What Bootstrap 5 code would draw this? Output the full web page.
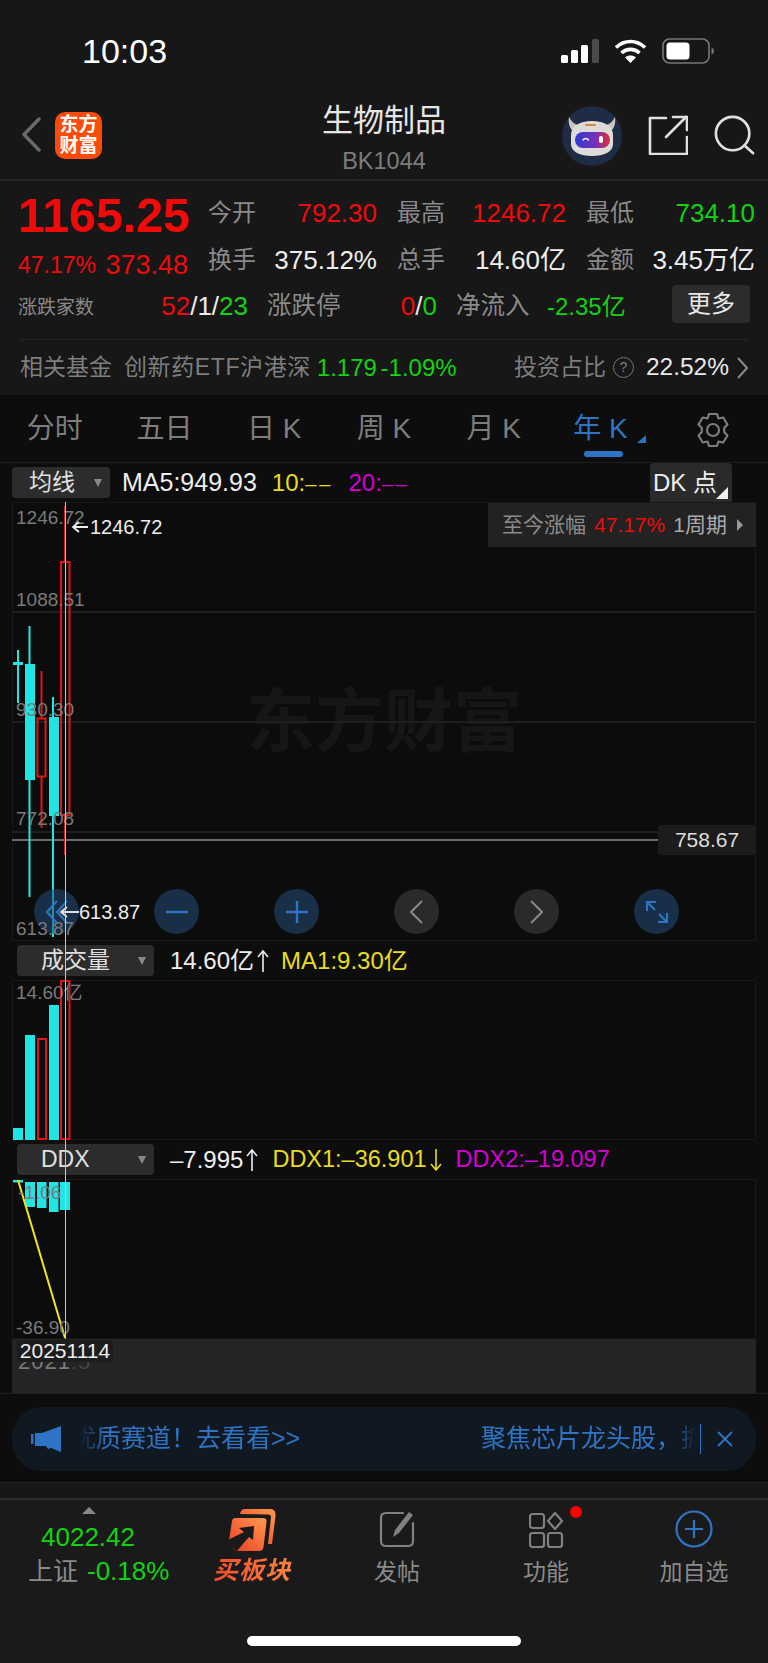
<!DOCTYPE html>
<html lang="zh-CN">
<head>
    <meta charset="UTF-8">
    <meta name="viewport" content="width=device-width, initial-scale=1.0">
    <title>生物制品</title>
    <link href="https://cdn.jsdelivr.net/npm/bootstrap@5.3.0/dist/css/bootstrap.min.css" rel="stylesheet">
    <style>
        body { width: 768px; height: 1663px; overflow: hidden; background: #0d0d0d; color: #e8e8e8;
            font-family: "Liberation Sans", "Noto Sans CJK SC", sans-serif; }
        .c-red { color: #f00a0a; }
        .c-green { color: #12d212; }
        .c-blue { color: #2f74c4; }
        .c-yellow { color: #e8dc20; }
        .c-mag { color: #d400d4; }
        .c-gray { color: #8a8a8a; }
        .c-white { color: #eee; }

        .status-bar { height: 90px; background: #171717; padding: 0 54px 0 82px; }
        .status-time { font-size: 34px; font-weight: 500; color: #fff; margin-top: 12px; }
        .status-icons { margin-top: 12px; column-gap: 15px; }
        .nav-head { height: 91px; background: #171717; border-bottom: 2px solid #262626; padding: 0 12px 0 22px; }
        .brand-logo { width: 47px; height: 47px; border-radius: 10px; background: #fb4b0a; color: #fff; font-size: 19px;
            font-weight: 700; line-height: 21px; margin-left: 14px; margin-top: 2px; text-align: center; padding-top: 2px; }
        .nav-title { left: 0; right: 0; top: 9px; }
        .nav-name { font-size: 31px; line-height: 44px; color: #e6e6e6; }
        .nav-code { font-size: 23.5px; line-height: 28px; margin-top: 4px; color: #7c7c7c; }
        .nav-avatar { margin-top: 2px; }
        .nav-gap { margin-left: 26px; }

        .info-box { height: 214px; background: #171717; }
        .info-top { padding: 16px 13px 0 18px; height: 95px; }
        .info-left { width: 172px; margin-right: 18px; }
        .big-price { font-size: 48.5px; font-weight: 700; line-height: 44px; margin-top: -4px; white-space: nowrap; letter-spacing: -.1px; }
        .price-sub { font-size: 27px; line-height: 32px; margin-top: 12px; padding-right: 2px; white-space: nowrap; }
        .price-pct { font-size: 23px; }
        .info-pairs { row-gap: 15px; width: 547px; }
        .info-pair { width: 169px; height: 32px; font-size: 26px; line-height: 32px; white-space: nowrap; }
        .info-pair .lbl { font-size: 24px; color: #8a8a8a; }
        .info-row3 { display: grid; grid-template-columns: 143px 106px 73px 116px 91px 125px 78px; grid-template-rows: 38px; padding-left: 18px;
            height: 38px; margin-top: 9px; align-items: center; font-size: 26px; white-space: nowrap; }
        .cell-end { text-align: right; padding-right: 19px; padding-top: 5px; }
        .small-lbl { font-size: 19px; color: #8a8a8a; padding-top: 9px; }
        .mid-lbl { font-size: 24.5px; color: #8a8a8a; padding-top: 5px; }
        .flow-val { font-size: 24px; padding-top: 6px; }
        .more-btn { width: 78px; height: 38px; background: #2c2c2c; border-radius: 4px; color: #e8e8e8; font-size: 24px; line-height: 38px; text-align: center; }
        .info-row4 { margin: 16px 20px 0; border-top: 1px solid #262626; height: 56px; font-size: 23px; color: #7e7e7e; white-space: nowrap; }
        .fund-name { margin-left: 12px; letter-spacing: .6px; }
        .fund-val { margin-left: 6px; font-size: 24px; word-spacing: -3px; }
        .q-mark { width: 21px; height: 21px; border: 1px solid #777; border-radius: 50%; font-size: 14px; text-align: center; line-height: 19px; margin: 0 12px 0 7px; }
        .pct-val { font-size: 24.5px; color: #e8e8e8; }

        .tab-row { height: 68px; border-bottom: 1px solid #1e1e1e; font-size: 28px; color: #7d7d7d; }
        .tab-on { color: #2f74c4; }
        .tab-on-text { margin-right: 6px; }
        .tab-line { width: 39px; height: 6px; background: #2f74c4; border-radius: 3px; left: 35px; bottom: 5px; }
        .tab-corner { width: 0; height: 0; border-left: 9px solid transparent; border-bottom: 8px solid #2f74c4; left: 88px; top: 40px; }

        .chart-wrap { padding: 0 12px; height: 930px; }
        .ind-bar { height: 39px; font-size: 24px; white-space: nowrap; }
        .ind-pick { background: #2c2c2c; border-radius: 4px; height: 31px; color: #e0e0e0; font-size: 23px; line-height: 31px; flex-shrink: 0; }
        .pick-s { width: 98px; padding-left: 17px; }
        .pick-l { width: 137px; margin-left: 5px; padding-left: 24px; }
        .pick-caret { width: 0; height: 0; border-left: 4px solid transparent; border-right: 4px solid transparent; border-top: 8px solid #888; right: 8px; top: 12px; }
        .ma-val { font-size: 25px; margin-left: 12px; }
        .ma-extra { margin-left: 15px; }
        .ma-dash { font-size: 20px; letter-spacing: 3px; }
        .vol-extra { margin-left: 12px; }
        .val-gap { margin-left: 16px; }
        .ddx-one { font-size: 23.5px; margin-left: 14px; }
        .up-arrow { margin-left: 3px; flex-shrink: 0; }
        .dk-btn { width: 82px; height: 39px; background: #2a2a2a; border-radius: 4px 4px 0 0; margin-right: 24px; padding-right: 12px; text-align: center; line-height: 39px; font-size: 24px; color: #eee; }
        .dk-corner { width: 0; height: 0; border-left: 12px solid transparent; border-bottom: 12px solid #eee; right: 4px; bottom: 3px; }
        .chart-pane { box-shadow: inset 0 0 0 1px #181818; background: #0c0c0c; }
        .pane-main { height: 439px; }
        .pane-sub { height: 160px; }
        .chart-svg { left: 0; top: 0; }
        .ax-lbl { font-size: 19px; fill: #7a7a7a; }
        .arrow-lbl { font-size: 20px; fill: #eee; }
        .water-mark { left: 234px; top: 188px; font-size: 69px; font-weight: 700; color: #161616; line-height: 66px; white-space: nowrap; }
        .since-box { right: 0; top: 1px; width: 268px; height: 44px; background: #222; font-size: 21px; color: #8a8a8a; padding-left: 14px; white-space: nowrap; }
        .since-cycle { color: #aaa; }
        .since-arrow { width: 0; height: 0; border-top: 6px solid transparent; border-bottom: 6px solid transparent; border-left: 6px solid #999; margin-left: 10px; }
        .last-box { right: 0; top: 323px; width: 98px; height: 30px; background: #1c1c1c; border-radius: 3px; font-size: 21px; line-height: 30px; text-align: center; color: #ddd; }
        .round-row { left: 22px; top: 387px; gap: 75px; }
        .round-btn { width: 45px; height: 45px; border-radius: 50%; }
        .rb-blue { background: rgba(34, 77, 121, .55); }
        .rb-gray { background: #2a2a2a; }
        .cross-v { left: 65px; top: 39px; width: 1px; height: 837px; background: #c8c8c8; z-index: 3; }
        .axis-strip { height: 54px; background: #242426; }
        .date-tip { left: 5px; top: 1px; height: 22px; width: 96px; background: #1d1d1d; font-size: 21px; line-height: 22px; text-align: center; color: #eee; border-radius: 2px; }
        .date-tick { left: 6px; top: 10px; font-size: 22px; line-height: 26px; letter-spacing: 1px; color: #7a7a7a; }
        .date-dim { color: #444; }

        .banner-wrap { height: 89px; padding: 13px 12px 0; border-top: 1px solid #202020; }
        .banner-box { height: 64px; border-radius: 30px; background: #101822; padding-left: 19px; font-size: 25px; white-space: nowrap; }
        .banner-text { width: 617px; margin-left: 18px; -webkit-mask-image: linear-gradient(to right, transparent 0, #000 26px, #000 590px, transparent 100%); mask-image: linear-gradient(to right, transparent 0, #000 26px, #000 590px, transparent 100%); }
        .banner-left { width: 410px; margin-left: -9px; }
        .banner-sep { width: 1px; height: 30px; background: #2f74c4; margin-left: 3px; }
        .gap-strip { height: 16px; background: #171717; border-top: 1px solid #202020; }
        .tool-bar { height: 165px; background: #1a1a1a; border-top: 2px solid #2a2a2a; }
        .tool-cells { height: 95px; display: grid; grid-template-columns: 178px 148px 142px 156px 140px; }
        .tool-quote { padding-top: 7px; padding-left: 28px; }
        .up-tri { width: 0; height: 0; border-left: 7px solid transparent; border-right: 7px solid transparent; border-bottom: 7px solid #888; margin-left: 54px; }
        .quote-num { font-size: 26px; line-height: 32px; margin: 7px 0 0 13px; }
        .quote-line { font-size: 25px; line-height: 34px; margin-top: 1px; white-space: nowrap; }
        .quote-pct { font-size: 26px; margin-left: 2px; }
        .tool-cell { font-size: 23px; line-height: 32px; color: #8a8a8a; }
        .tool-icon { height: 48px; }
        .tool-icon-buy { height: 51px; }
        .tool-label { margin-top: 8px; }
        .buy-word { font-size: 25px; font-weight: 700; font-style: italic; line-height: 26px; letter-spacing: 1px; margin-top: 6px;
            background: linear-gradient(90deg, #f0351f, #ff9a4a); -webkit-background-clip: text; background-clip: text; color: transparent; }
        .red-dot { width: 12px; height: 12px; border-radius: 50%; background: #f00; right: 42px; top: 6px; }
        .home-bar { width: 274px; height: 10px; background: #fff; border-radius: 5px; margin: 41px auto 0; }
    </style>
</head>
<body>

<div class="status-bar d-flex justify-content-between align-items-center">
    <span class="status-time">10:03</span>
    <div class="status-icons d-flex align-items-center">
        <svg width="38" height="24" viewBox="0 0 38 24"><rect x="0" y="16" width="7" height="8" rx="1.5" fill="#fff"/><rect x="10" y="11" width="7" height="13" rx="1.5" fill="#fff"/><rect x="20" y="6" width="7" height="18" rx="1.5" fill="#fff"/><rect x="31" y="0" width="7" height="24" rx="1.5" fill="#4a4a4a"/></svg>
        <svg width="33" height="24" viewBox="0 0 33 24" fill="none" stroke="#fff" stroke-width="3.6"><path d="M2 8.5c8.5-8 20.5-8 29 0"/><path d="M7.5 14c5.2-4.8 12.8-4.8 18 0"/><path d="M16.5 24l-5.4-5.6c3-2.6 7.8-2.6 10.8 0z" fill="#fff" stroke="none"/></svg>
        <svg width="52" height="26" viewBox="0 0 52 26"><rect x="1" y="1" width="46" height="24" rx="6.5" fill="none" stroke="#777" stroke-width="1.6"/><rect x="4.5" y="4.5" width="23" height="17" rx="3.5" fill="#fff"/><path d="M49.5 9.5c1.6.5 2.5 2 2.5 3.5s-.9 3-2.5 3.5z" fill="#777"/></svg>
    </div>
</div>

<div class="nav-head d-flex align-items-center position-relative">
    <svg width="19" height="35" viewBox="0 0 19 35" fill="none" stroke="#6a6a6a" stroke-width="3.4" stroke-linecap="round" stroke-linejoin="round"><path d="M17 2L2 17.5 17 33"/></svg>
    <div class="brand-logo">东方<br>财富</div>
    <div class="nav-title position-absolute text-center">
        <div class="nav-name">生物制品</div>
        <div class="nav-code">BK1044</div>
    </div>
    <div class="ms-auto d-flex align-items-center">
        <svg class="nav-avatar" width="60" height="60" viewBox="0 0 60 60">
            <defs><linearGradient id="visor" x1="0" x2="1"><stop offset="0" stop-color="#2b3bd0"/><stop offset=".6" stop-color="#7a30b8"/><stop offset="1" stop-color="#e02a3a"/></linearGradient></defs>
            <circle cx="30" cy="30" r="30" fill="#1f2c46"/>
            <path d="M7 11c-1 7 1 12 5 15l4-7c-4-1-7-4-9-8zM53 11c1 7-1 12-5 15l-4-7c4-1 7-4 9-8z" fill="#c9c6c2"/>
            <path d="M9 29c0-9 9-14 21-14s21 5 21 14v9c0 8-9 12-21 12S9 46 9 38z" fill="#dedcd9"/>
            <rect x="23" y="18" width="11" height="2" rx="1" fill="#d98a3a"/>
            <rect x="13" y="26" width="35" height="16" rx="8" fill="url(#visor)"/>
            <path d="M21 34c1.500-2 4-2 5.500 0" fill="none" stroke="#fff" stroke-width="1.400" stroke-linecap="round"/>
            <rect x="37" y="30" width="4" height="7" rx="2" fill="#fff"/>
        </svg>
        <svg class="nav-gap" width="40" height="40" viewBox="0 0 40 40" fill="none" stroke="#e0e0e0" stroke-width="2.6" stroke-linecap="round" stroke-linejoin="round"><path d="M18 3H2v36h37V22"/><path d="M18 22L38 2"/><path d="M25 2h14v13"/></svg>
        <svg class="nav-gap" width="42" height="42" viewBox="0 0 44 42" fill="none" stroke="#e0e0e0" stroke-width="2.8" stroke-linecap="round"><circle cx="19.5" cy="19.5" r="17.5"/><path d="M32 32l9 8"/></svg>
    </div>
</div>

<div class="info-box">
    <div class="info-top d-flex">
        <div class="info-left">
            <div class="big-price c-red">1165.25</div>
            <div class="price-sub c-red d-flex justify-content-between align-items-center"><span class="price-pct">47.17%</span><span>373.48</span></div>
        </div>
        <div class="info-pairs d-flex flex-wrap justify-content-between">
            <div class="info-pair d-flex justify-content-between"><span class="lbl">今开</span><span class="c-red">792.30</span></div>
            <div class="info-pair d-flex justify-content-between"><span class="lbl">最高</span><span class="c-red">1246.72</span></div>
            <div class="info-pair d-flex justify-content-between"><span class="lbl">最低</span><span class="c-green">734.10</span></div>
            <div class="info-pair d-flex justify-content-between"><span class="lbl">换手</span><span class="c-white">375.12%</span></div>
            <div class="info-pair d-flex justify-content-between"><span class="lbl">总手</span><span class="c-white">14.60亿</span></div>
            <div class="info-pair d-flex justify-content-between"><span class="lbl">金额</span><span class="c-white">3.45万亿</span></div>
        </div>
    </div>
    <div class="info-row3">
        <span class="small-lbl">涨跌家数</span>
        <span class="cell-end"><span class="c-red">52</span><span class="c-white">/1/</span><span class="c-green">23</span></span>
        <span class="mid-lbl">涨跌停</span>
        <span class="cell-end"><span class="c-red">0</span><span class="c-white">/</span><span class="c-green">0</span></span>
        <span class="mid-lbl">净流入</span>
        <span class="flow-val c-green">-2.35亿</span>
        <span class="more-btn">更多</span>
    </div>
    <div class="info-row4 d-flex align-items-center">
        <span>相关基金</span>
        <span class="fund-name">创新药ETF沪港深</span>
        <span class="fund-val c-green">1.179 -1.09%</span>
        <span class="ms-auto">投资占比</span>
        <span class="q-mark">?</span>
        <span class="pct-val">22.52%</span>
        <svg class="ms-2" width="11" height="22" viewBox="0 0 11 22" fill="none" stroke="#888" stroke-width="2"><path d="M1 1l9 10-9 10"/></svg>
    </div>
</div>

<div class="tab-row row g-0 text-center align-items-center">
    <div class="col">分时</div>
    <div class="col">五日</div>
    <div class="col">日 K</div>
    <div class="col">周 K</div>
    <div class="col">月 K</div>
    <div class="col tab-on position-relative h-100 d-flex align-items-center justify-content-center"><span class="tab-on-text">年 K</span><span class="tab-corner position-absolute"></span><span class="tab-line position-absolute"></span></div>
    <div class="col">
        <svg width="34" height="36" viewBox="0 0 34 36" fill="none" stroke="#7d7d7d" stroke-width="2.2" stroke-linejoin="round"><path d="M13 2h8l1.5 4.5 4.7-1 4.3 7-3.3 3.5v4l3.3 3.5-4.3 7-4.7-1L21 34h-8l-1.5-4.5-4.7 1-4.3-7L5.800 20v-4L2.500 12.500l4.300-7 4.700 1z"/><circle cx="17" cy="18" r="6"/></svg>
    </div>
</div>

<div class="chart-wrap position-relative">
    <div class="cross-v position-absolute"></div>

    <div class="ind-bar d-flex align-items-center">
        <div class="ind-pick pick-s position-relative">均线<span class="pick-caret position-absolute"></span></div>
        <span class="ma-val c-white">MA5:949.93</span>
        <span class="c-yellow ma-extra">10:<span class="ma-dash">––</span></span>
        <span class="c-mag ma-extra">20:<span class="ma-dash">––</span></span>
        <div class="dk-btn ms-auto position-relative">DK 点<span class="dk-corner position-absolute"></span></div>
    </div>

    <div class="chart-pane pane-main position-relative">
        <div class="water-mark position-absolute">东方财富</div>
        <svg class="chart-svg position-absolute" width="744" height="439" viewBox="12 502 744 439">
            <g stroke="#1f1f1f" stroke-width="2"><path d="M12 612H756M12 722H756M12 832H756"/></g>
            <path d="M12 840H658" stroke="#6a6a6a" stroke-width="2"/>
            <g stroke="#1fe5e5" fill="#1fe5e5">
                <path d="M18 650V703M29.500 626V897M53 697V937" stroke-width="2" fill="none"/>
                <rect x="13" y="662" width="10" height="3" stroke="none"/>
                <rect x="25" y="664" width="10" height="116" stroke="none"/>
                <rect x="49" y="717" width="10" height="99" stroke="none"/>
            </g>
            <g stroke="#e01414" fill="none" stroke-width="2">
                <path d="M41.500 671V718M41.500 777V828M65 506V561M65 815V855"/>
                <rect x="37.500" y="718.500" width="8" height="58"/>
                <rect x="61" y="562" width="8.500" height="253"/>
            </g>
            <text class="ax-lbl" x="16" y="524">1246.72</text>
            <text class="ax-lbl" x="16" y="606">1088.51</text>
            <text class="ax-lbl" x="16" y="716">930.30</text>
            <text class="ax-lbl" x="16" y="825">772.08</text>
            <path d="M88 527H73M79 522l-6 5 6 5" stroke="#eee" stroke-width="1.800" fill="none"/>
            <text class="arrow-lbl" x="90" y="534">1246.72</text>
        </svg>
        <div class="since-box position-absolute d-flex align-items-center">
            <span>至今涨幅</span><span class="c-red ms-2">47.17%</span><span class="since-cycle ms-2">1周期</span><span class="since-arrow"></span>
        </div>
        <div class="last-box position-absolute">758.67</div>
        <div class="round-row position-absolute d-flex">
            <div class="round-btn rb-blue d-flex align-items-center justify-content-center"><svg width="22" height="24" viewBox="0 0 22 24" fill="none" stroke="#2f74c4" stroke-width="2"><path d="M11 1L1 12l10 11M21 1L11 12l10 11"/></svg></div>
            <div class="round-btn rb-blue d-flex align-items-center justify-content-center"><svg width="22" height="4" viewBox="0 0 22 4"><path d="M0 2h22" stroke="#2f74c4" stroke-width="2.400"/></svg></div>
            <div class="round-btn rb-blue d-flex align-items-center justify-content-center"><svg width="22" height="22" viewBox="0 0 22 22"><path d="M0 11h22M11 0v22" stroke="#2f74c4" stroke-width="2.400"/></svg></div>
            <div class="round-btn rb-gray d-flex align-items-center justify-content-center"><svg width="13" height="24" viewBox="0 0 13 24" fill="none" stroke="#888" stroke-width="2"><path d="M12 1L1 12l11 11"/></svg></div>
            <div class="round-btn rb-gray d-flex align-items-center justify-content-center"><svg width="13" height="24" viewBox="0 0 13 24" fill="none" stroke="#888" stroke-width="2"><path d="M1 1l11 11L1 23"/></svg></div>
            <div class="round-btn rb-blue d-flex align-items-center justify-content-center"><svg width="24" height="24" viewBox="0 0 24 24" fill="none" stroke="#2f74c4" stroke-width="2.200"><path d="M2 11V2h9M2 2l8 8M22 13v9h-9M22 22l-8-8"/></svg></div>
        </div>
        <svg class="chart-svg position-absolute" width="744" height="439" viewBox="12 502 744 439">
            <text class="ax-lbl" x="16" y="935">613.87</text>
            <path d="M79 912H61M67 907l-6 5 6 5" stroke="#ddd" stroke-width="2" fill="none"/>
            <text class="arrow-lbl" x="79" y="919">613.87</text>
        </svg>
    </div>

    <div class="ind-bar d-flex align-items-center">
        <div class="ind-pick pick-l position-relative">成交量<span class="pick-caret position-absolute"></span></div>
        <span class="val-gap c-white">14.60亿</span>
        <svg class="up-arrow" width="12" height="22" viewBox="0 0 12 22" fill="none" stroke="#eee" stroke-width="1.600"><path d="M6 22V1M1 7l5-6 5 6"/></svg>
        <span class="c-yellow vol-extra">MA1:9.30亿</span>
    </div>

    <div class="chart-pane pane-sub position-relative">
        <svg class="chart-svg position-absolute" width="744" height="160" viewBox="12 980 744 160">
            <g fill="#1fe5e5"><rect x="13" y="1128" width="10" height="12"/><rect x="25" y="1035" width="10" height="105"/><rect x="49" y="1005" width="10" height="135"/></g>
            <g fill="none" stroke="#e01414" stroke-width="2"><rect x="38" y="1039" width="8" height="100"/><rect x="61" y="981" width="8.500" height="158"/></g>
            <text class="ax-lbl" x="16" y="999">14.60亿</text>
        </svg>
    </div>

    <div class="ind-bar d-flex align-items-center">
        <div class="ind-pick pick-l position-relative">DDX<span class="pick-caret position-absolute"></span></div>
        <span class="val-gap c-white">–7.995</span>
        <svg class="up-arrow" width="12" height="22" viewBox="0 0 12 22" fill="none" stroke="#eee" stroke-width="1.600"><path d="M6 22V1M1 7l5-6 5 6"/></svg>
        <span class="c-yellow ddx-one">DDX1:–36.901</span>
        <svg class="up-arrow" width="12" height="22" viewBox="0 0 12 22" fill="none" stroke="#e8dc20" stroke-width="1.600"><path d="M6 0v21M1 15l5 6 5-6"/></svg>
        <span class="c-mag ddx-one">DDX2:–19.097</span>
    </div>

    <div class="chart-pane pane-sub position-relative">
        <svg class="chart-svg position-absolute" width="744" height="160" viewBox="12 1179 744 160">
            <g fill="#1fe5e5"><rect x="13" y="1180" width="10" height="2.500"/><rect x="25" y="1182" width="10" height="25"/><rect x="37" y="1182" width="9.500" height="26"/><rect x="49" y="1182" width="9.500" height="30"/><rect x="60" y="1182" width="10" height="28"/></g>
            <path d="M18 1180L65 1338" stroke="#f2e41e" stroke-width="2" fill="none"/>
            <text class="ax-lbl" x="18" y="1199">-1.06</text>
            <text class="ax-lbl" x="16" y="1334">-36.90</text>
        </svg>
    </div>

    <div class="axis-strip position-relative">
        <span class="date-tick position-absolute">2021<span class="date-dim">.5</span></span>
        <div class="date-tip position-absolute">20251114</div>
    </div>
</div>

<div class="banner-wrap">
    <div class="banner-box d-flex align-items-center c-blue">
        <svg width="31" height="26" viewBox="0 0 31 26" fill="#2f74c4"><rect x="0" y="8" width="2.500" height="10"/><path d="M4 7h7L30 0v26l-10-4-3 1-2-3H4z"/></svg>
        <div class="banner-text d-flex overflow-hidden">
            <span class="banner-left flex-shrink-0">优质赛道！去看看&gt;&gt;</span>
            <span class="flex-shrink-0">聚焦芯片龙头股，抓</span>
        </div>
        <span class="banner-sep"></span>
        <svg class="ms-3" width="16" height="16" viewBox="0 0 16 16" stroke="#2f74c4" stroke-width="1.800"><path d="M1 1l14 14M15 1L1 15"/></svg>
    </div>
</div>
<div class="gap-strip"></div>

<div class="tool-bar">
    <div class="tool-cells">
        <div class="tool-quote">
            <div class="up-tri"></div>
            <div class="quote-num c-green">4022.42</div>
            <div class="quote-line"><span class="c-gray">上证</span> <span class="c-green quote-pct">-0.18%</span></div>
        </div>
        <div class="tool-cell text-center">
            <div class="tool-icon-buy d-flex align-items-end justify-content-center">
                <svg width="47" height="43" viewBox="38 18 47 43">
                    <defs><linearGradient id="buyg" x1="0" y1="1" x2="1" y2="0"><stop offset="0" stop-color="#ee3a22"/><stop offset="1" stop-color="#ff9a50"/></linearGradient></defs>
                    <path d="M49 24Q50 19 54 19H79Q85 19 84.500 26L81 54H77L80 27Q80 24.500 77.500 24.500z" fill="url(#buyg)"/>
                    <path d="M44 28H72Q76 28 75.500 32L72.500 57Q72 61 68 61H44L38 50L41 31Q41.500 28 44 28z" fill="url(#buyg)"/>
                    <path d="M63 36L48 38L53 42L37 50L45 62L58 47L62 50z" fill="#1a1a1a"/>
                </svg>
            </div>
            <div class="buy-word">买板块</div>
        </div>
        <div class="tool-cell text-center">
            <div class="tool-icon d-flex align-items-end justify-content-center">
                <svg width="36" height="37" viewBox="0 0 36 37" fill="none" stroke="#808080" stroke-width="2.200" stroke-linecap="round"><path d="M24 2H7Q2 2 2 7v23q0 5 5 5h22q5 0 5-5V12"/><path d="M14 26l2-7L30 1l4 3-14 18z" fill="#808080" stroke="none"/></svg>
            </div>
            <div class="tool-label">发帖</div>
        </div>
        <div class="tool-cell text-center position-relative">
            <div class="tool-icon d-flex align-items-end justify-content-center">
                <svg width="35" height="36" viewBox="0 0 35 36" fill="none" stroke="#808080" stroke-width="2.200" stroke-linejoin="round"><rect x="1" y="2" width="14" height="14" rx="2.500"/><path d="M26 1l7 8-7 8-7-8z"/><rect x="1" y="21" width="14" height="14" rx="2.500"/><rect x="19" y="21" width="14" height="14" rx="2.500"/></svg>
            </div>
            <span class="red-dot position-absolute"></span>
            <div class="tool-label">功能</div>
        </div>
        <div class="tool-cell text-center c-blue">
            <div class="tool-icon d-flex align-items-end justify-content-center">
                <svg width="38" height="38" viewBox="0 0 38 38" fill="none" stroke="#2f74c4" stroke-width="2.200"><circle cx="19" cy="19" r="17.500"/><path d="M19 10v18M10 19h18"/></svg>
            </div>
            <div class="tool-label">加自选</div>
        </div>
    </div>
    <div class="home-bar"></div>
</div>

<script src="https://cdn.jsdelivr.net/npm/bootstrap@5.3.0/dist/js/bootstrap.bundle.min.js"></script>
</body>
</html>
